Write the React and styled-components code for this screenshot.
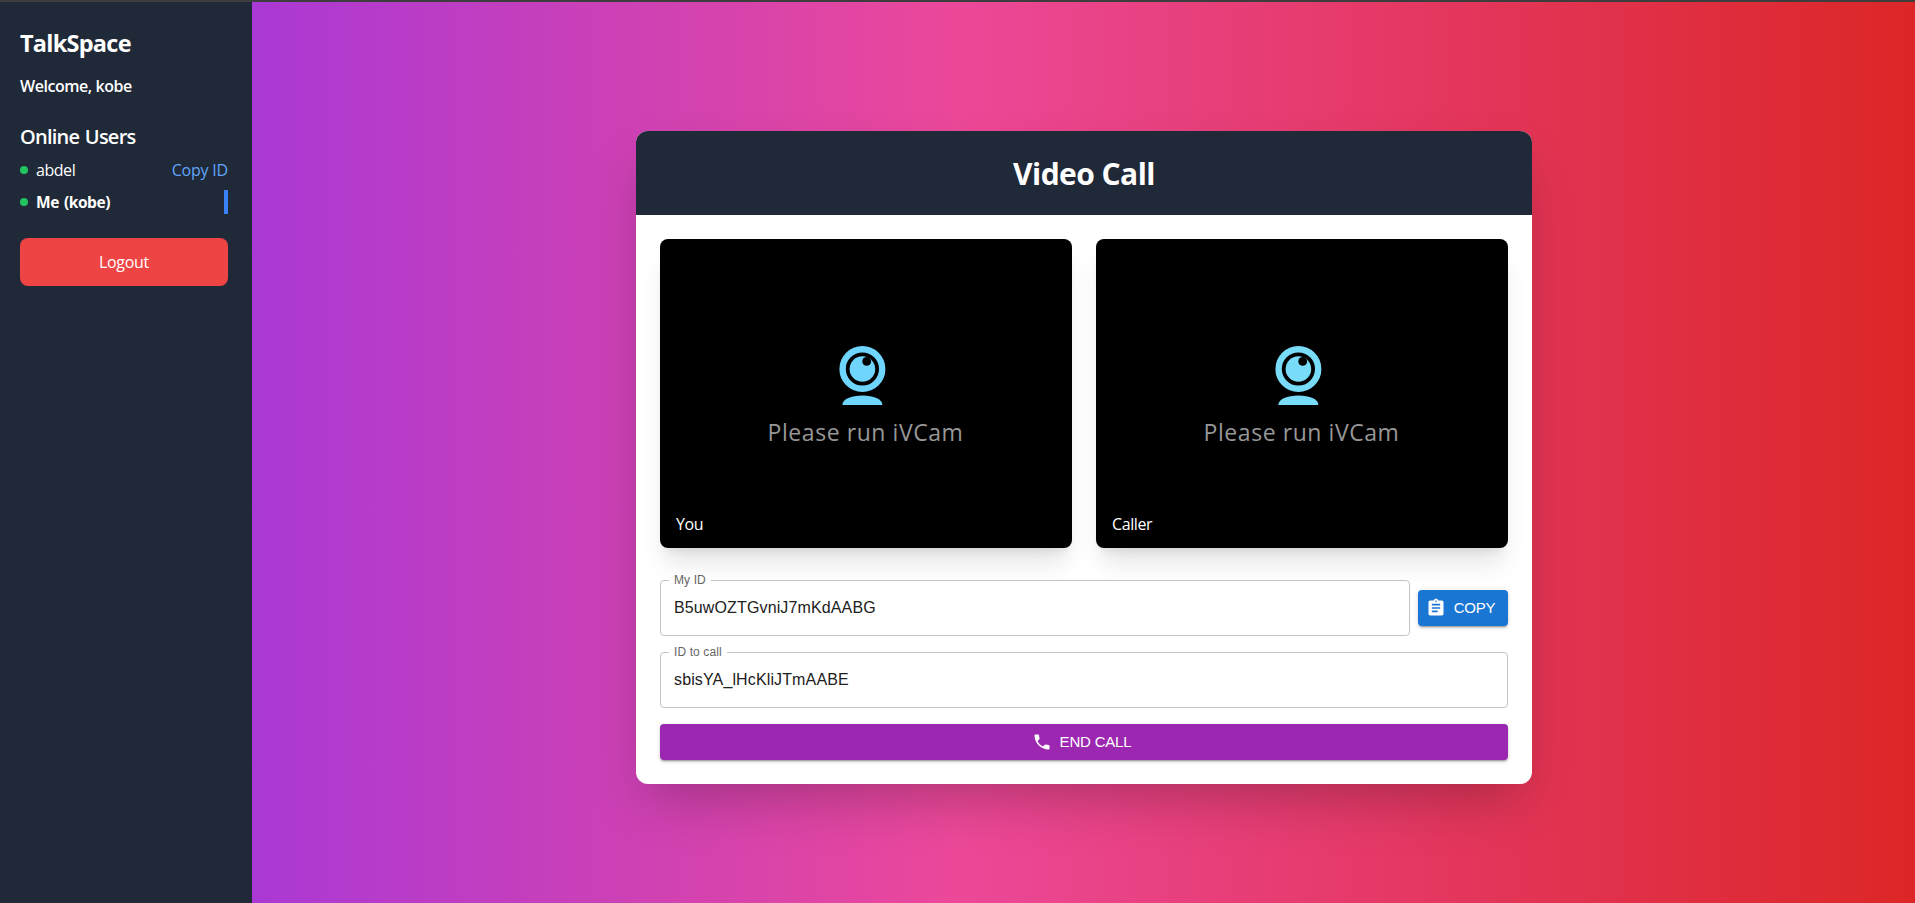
import React from "react";
import styled, { createGlobalStyle } from "styled-components";

const GlobalStyle = createGlobalStyle`
  *, *::before, *::after { box-sizing: border-box; }
  html, body { margin: 0; padding: 0; overflow: hidden; }
  h1, h2, h3, p, ul { margin: 0; padding: 0; font-weight: inherit; }
  ul { list-style: none; }
  body { font-family: "Open Sans", "Noto Sans", sans-serif; font-size: 16px; line-height: 24px; }
  button, input { font: inherit; border: 0; cursor: pointer; }
`;

const Page = styled.div`
  display: flex;
  height: 903px;
  border-top: 2px solid #3d3d3d;
  background: linear-gradient(to right, #9333ea, #ec4899, #dc2626) border-box;
`;

const Sidebar = styled.aside`
  width: 252px;
  flex: none;
  padding: 24px 24px 24px 20px;
  background: #1f2937;
  color: #fff;
`;

const Brand = styled.h1`
  font-size: 23.5px;
  line-height: 32px;
  font-weight: 700;
  letter-spacing: -0.75px;
  margin: 1px 0 16px;
`;

const Welcome = styled.p`
  font-weight: 600;
  letter-spacing: -0.45px;
  margin: -1px 0 25px;
`;

const SectionTitle = styled.h2`
  font-size: 20px;
  line-height: 28px;
  font-weight: 600;
  letter-spacing: -0.75px;
  word-spacing: 1px;
  margin-bottom: 7px;
`;

const UserRow = styled.li`
  display: flex;
  align-items: center;
  height: 24px;
  margin-bottom: 8px;
  border-right: ${(p) => (p.$me ? "4px solid #3b82f6" : "0")};
`;

const Dot = styled.span`
  width: 8px;
  height: 8px;
  margin-right: 8px;
  border-radius: 50%;
  background: #22c55e;
`;

const UserName = styled.span`
  flex: 1;
  font-weight: ${(p) => (p.$me ? 700 : 400)};
  font-size: ${(p) => (p.$me ? "15.5px" : "16px")};
  letter-spacing: -0.45px;
  word-spacing: 1.5px;
`;

const CopyLink = styled.button`
  padding: 0;
  background: none;
  color: #60a5fa;
  letter-spacing: -0.2px;
`;

const Logout = styled.button`
  width: 100%;
  height: 48px;
  margin-top: 16px;
  border-radius: 8px;
  background: #ef4444;
  color: #fff;
  letter-spacing: -0.3px;
`;

const Main = styled.main`
  flex: 1;
  display: flex;
  justify-content: center;
  align-items: flex-start;
  padding: 129px 0 0 1px;
`;

const Card = styled.section`
  width: 896px;
  border-radius: 12px;
  overflow: hidden;
  background: #fff;
  box-shadow: 0 25px 50px -12px rgba(0, 0, 0, 0.25);
`;

const CardHeader = styled.header`
  padding: 25px 24px 23px;
  background: #1f2937;
  color: #fff;
  text-align: center;
  font-size: 30px;
  line-height: 36px;
  font-weight: 700;
  letter-spacing: -0.55px;
`;

const CardBody = styled.div`
  padding: 24px;
`;

const Videos = styled.div`
  display: grid;
  grid-template-columns: 1fr 1fr;
  gap: 24px;
  margin-bottom: 32px;
`;

const VideoTile = styled.div`
  position: relative;
  height: 309px;
  padding: 107px 0 0;
  display: flex;
  flex-direction: column;
  align-items: center;
  border-radius: 8px;
  background: #000;
  box-shadow: 0 20px 25px -5px rgba(0, 0, 0, 0.1), 0 8px 10px -6px rgba(0, 0, 0, 0.1);
`;

const CamIcon = styled.svg`
  width: 48px;
  height: 60px;
  margin-right: 8px;
`;

const CamText = styled.p`
  margin: 9px 1px 0 0;
  font-size: 23px;
  line-height: 34px;
  letter-spacing: 0.56px;
  color: #979797;
`;

const VideoLabel = styled.span`
  position: absolute;
  left: 16px;
  bottom: 12px;
  font-weight: 500;
  letter-spacing: -0.4px;
  color: #fff;
`;

const FieldRow = styled.div`
  display: flex;
  align-items: center;
  gap: 8px;
  margin-bottom: 16px;
`;

const Outline = styled.fieldset`
  flex: 1;
  min-width: 0;
  height: 61px;
  margin: -5px 0 0;
  padding: 0 8px;
  border: 1px solid #c4c4c4;
  border-radius: 4px;
`;

const Legend = styled.legend`
  padding: 0 5px;
  height: 11px;
  font-family: "Liberation Sans", sans-serif;
  font-size: 12px;
  line-height: 11px;
  letter-spacing: 0.11px;
  color: #666;
`;

const Value = styled.input`
  width: 100%;
  height: 23px;
  padding: 0 5px;
  margin-top: 10px;
  display: block;
  outline: 0;
  background: none;
  font-family: "Liberation Sans", sans-serif;
  font-size: 16px;
  letter-spacing: 0.13px;
  color: #212121;
`;

const ActionButton = styled.button`
  display: flex;
  align-items: center;
  justify-content: center;
  gap: 8px;
  width: ${(p) => p.$width};
  height: 36px;
  padding: 0 5px 0 0;
  border-radius: 4px;
  background: ${(p) => p.$color};
  color: #fff;
  font-family: "Liberation Sans", sans-serif;
  font-size: 15px;
  font-weight: 400;
  letter-spacing: -0.2px;
  box-shadow: 0 3px 1px -2px rgba(0, 0, 0, 0.2), 0 2px 2px rgba(0, 0, 0, 0.14), 0 1px 5px rgba(0, 0, 0, 0.12);
  svg { width: 20px; height: 20px; fill: #fff; }
`;

function Webcam({ color }) {
  return (
    <CamIcon viewBox="0 0 48 60">
      <circle cx="24.4" cy="23" r="19.8" fill="none" stroke={color} strokeWidth="6.4" />
      <circle cx="24.4" cy="23" r="12.8" fill={color} />
      <circle cx="28.7" cy="15.4" r="4.4" fill="#000" />
      <path d="M4.4 59C4.4 53 13.4 49.5 24.4 49.5S44.4 53 44.4 59Z" fill={color} />
    </CamIcon>
  );
}

function Video({ label, color }) {
  return (
    <VideoTile>
      <Webcam color={color} />
      <CamText>Please run iVCam</CamText>
      <VideoLabel>{label}</VideoLabel>
    </VideoTile>
  );
}

function Field({ label, value }) {
  return (
    <Outline>
      <Legend>{label}</Legend>
      <Value defaultValue={value} aria-label={label} />
    </Outline>
  );
}

export default function App() {
  return (
    <>
      <GlobalStyle />
      <Page>
        <Sidebar>
          <Brand>TalkSpace</Brand>
          <Welcome>Welcome, kobe</Welcome>
          <SectionTitle>Online Users</SectionTitle>
          <ul>
            <UserRow>
              <Dot />
              <UserName>abdel</UserName>
              <CopyLink>Copy ID</CopyLink>
            </UserRow>
            <UserRow $me>
              <Dot />
              <UserName $me>Me (kobe)</UserName>
            </UserRow>
          </ul>
          <Logout>Logout</Logout>
        </Sidebar>
        <Main>
          <Card>
            <CardHeader>Video Call</CardHeader>
            <CardBody>
              <Videos>
                <Video label="You" color="#6fd5fd" />
                <Video label="Caller" color="#78dcf8" />
              </Videos>
              <FieldRow>
                <Field label="My ID" value="B5uwOZTGvniJ7mKdAABG" />
                <ActionButton $width="90px" $color="#1976d2">
                  <svg viewBox="0 0 24 24">
                    <path d="M19 3h-4.18C14.4 1.84 13.3 1 12 1c-1.3 0-2.4.84-2.82 2H5c-1.1 0-2 .9-2 2v14c0 1.1.9 2 2 2h14c1.1 0 2-.9 2-2V5c0-1.1-.9-2-2-2zm-7 0c.55 0 1 .45 1 1s-.45 1-1 1-1-.45-1-1 .45-1 1-1zm2 14H7v-2h7v2zm3-4H7v-2h10v2zm0-4H7V7h10v2z" />
                  </svg>
                  COPY
                </ActionButton>
              </FieldRow>
              <FieldRow>
                <Field label="ID to call" value="sbisYA_lHcKliJTmAABE" />
              </FieldRow>
              <ActionButton $width="100%" $color="#9c27b0">
                <svg viewBox="0 0 24 24">
                  <path d="M6.62 10.79c1.44 2.83 3.76 5.14 6.59 6.59l2.2-2.2c.27-.27.67-.36 1.02-.24 1.12.37 2.33.57 3.57.57.55 0 1 .45 1 1V20c0 .55-.45 1-1 1-9.39 0-17-7.61-17-17 0-.55.45-1 1-1h3.5c.55 0 1 .45 1 1 0 1.25.2 2.45.57 3.57.11.35.03.74-.25 1.02l-2.2 2.2z" />
                </svg>
                END CALL
              </ActionButton>
            </CardBody>
          </Card>
        </Main>
      </Page>
    </>
  );
}
